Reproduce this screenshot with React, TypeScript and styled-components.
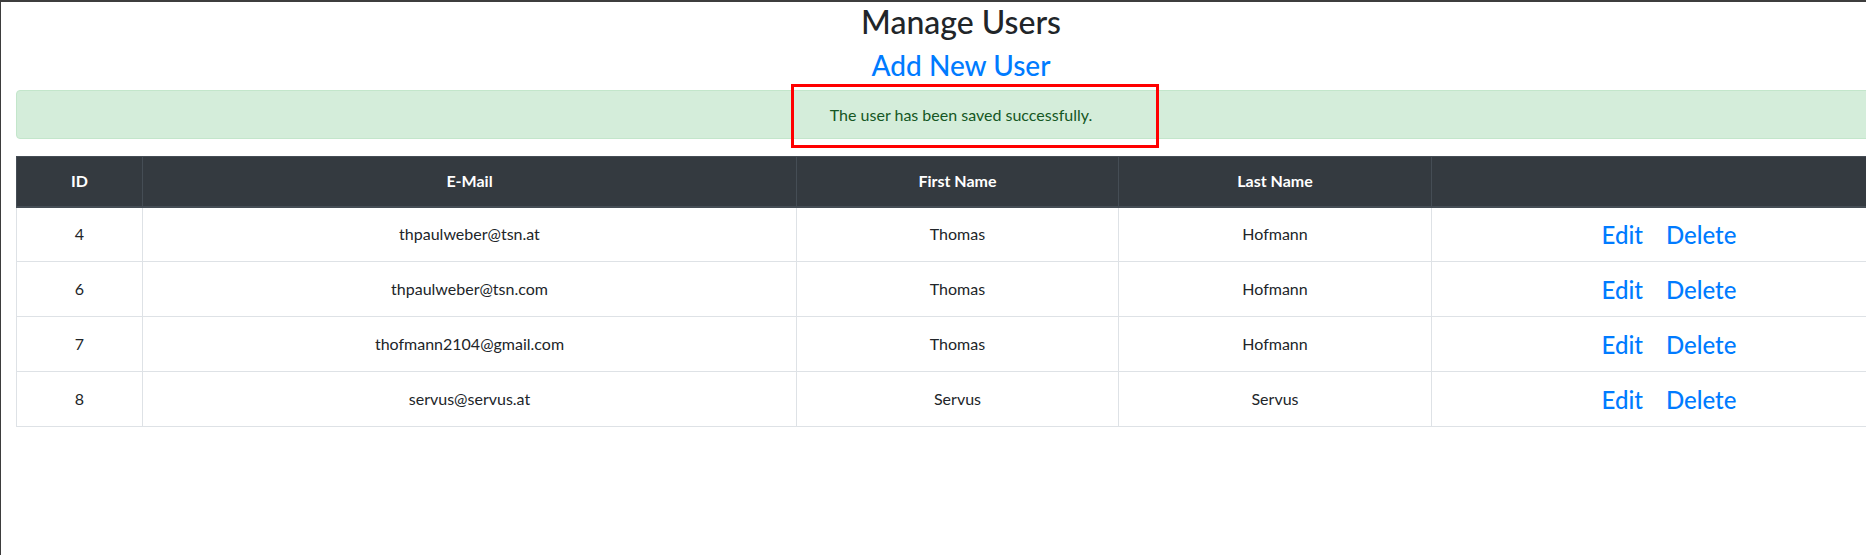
import React from "react";
import styled, { createGlobalStyle } from "styled-components";

const GlobalStyle = createGlobalStyle`
  html, body {
    margin: 0;
    padding: 0;
    overflow: hidden;
    background: #ffffff;
  }
  body {
    font-family: Lato, "Noto Sans", "Liberation Sans", sans-serif;
    font-size: 16px;
    line-height: 1.5;
    color: #212529;
  }
  * { box-sizing: border-box; }
`;

const Frame = styled.div`
  width: 1866px;
  height: 555px;
  border-top: 2px solid #3d3d3d;
  border-left: 1px solid #3d3d3d;
  overflow: hidden;
`;

const Container = styled.main`
  width: 1890px;
  margin-left: 15px;
  display: flex;
  flex-direction: column;
  align-items: stretch;
`;

const Title = styled.h2`
  margin: 1px 0 0;
  font-size: 32px;
  font-weight: 500;
  line-height: 38px;
  text-align: center;
  color: #212529;
`;

const AddLink = styled.a`
  display: block;
  margin: 7px 0 0;
  font-size: 28px;
  font-weight: 500;
  line-height: 34px;
  text-align: center;
  color: #007bff;
  text-decoration: none;
`;

const Alert = styled.div`
  position: relative;
  margin-top: 8px;
  margin-bottom: 17px;
  height: 49px;
  display: flex;
  align-items: center;
  justify-content: center;
  background: #d4edda;
  border: 1px solid #c3e6cb;
  border-radius: 4px;
  color: #155724;
  font-size: 16px;
`;

const Highlight = styled.span`
  position: absolute;
  left: 774px;
  top: -7px;
  width: 368px;
  height: 64px;
  border: 3px solid #ff0000;
  pointer-events: none;
`;

const Table = styled.table`
  width: 100%;
  border-collapse: collapse;
  table-layout: fixed;
  text-align: center;
`;

const HeadCell = styled.th`
  height: 50px;
  padding: 0 12px;
  background: #343a40;
  color: #ffffff;
  font-weight: 700;
  font-size: 16px;
  border: 1px solid #454d55;
  border-bottom-width: 2px;
  vertical-align: middle;
`;

const Row = styled.tr`
  height: 55px;
`;

const Cell = styled.td`
  padding: 0 12px;
  border: 1px solid #dee2e6;
  vertical-align: middle;
  color: #212529;
  font-size: 16px;
`;

const Actions = styled.div`
  display: flex;
  justify-content: center;
  gap: 23px;
  padding-top: 1px;
`;

const ActionLink = styled.a`
  font-size: 24px;
  font-weight: 500;
  line-height: 29px;
  color: #007bff;
  text-decoration: none;
`;

const users = [
  { id: 4, email: "thpaulweber@tsn.at", first: "Thomas", last: "Hofmann" },
  { id: 6, email: "thpaulweber@tsn.com", first: "Thomas", last: "Hofmann" },
  { id: 7, email: "thofmann2104@gmail.com", first: "Thomas", last: "Hofmann" },
  { id: 8, email: "servus@servus.at", first: "Servus", last: "Servus" },
];

export default function App() {
  return (
    <>
      <GlobalStyle />
      <Frame>
        <Container>
          <Title>Manage Users</Title>
          <AddLink href="#">Add New User</AddLink>
          <Alert>
            The user has been saved successfully.
            <Highlight />
          </Alert>
          <Table>
            <colgroup>
              <col style={{ width: 126 }} />
              <col style={{ width: 654 }} />
              <col style={{ width: 322 }} />
              <col style={{ width: 313 }} />
              <col style={{ width: 475 }} />
            </colgroup>
            <thead>
              <tr>
                <HeadCell>ID</HeadCell>
                <HeadCell>E-Mail</HeadCell>
                <HeadCell>First Name</HeadCell>
                <HeadCell>Last Name</HeadCell>
                <HeadCell />
              </tr>
            </thead>
            <tbody>
              {users.map((u) => (
                <Row key={u.id}>
                  <Cell>{u.id}</Cell>
                  <Cell>{u.email}</Cell>
                  <Cell>{u.first}</Cell>
                  <Cell>{u.last}</Cell>
                  <Cell>
                    <Actions>
                      <ActionLink href="#">Edit</ActionLink>
                      <ActionLink href="#">Delete</ActionLink>
                    </Actions>
                  </Cell>
                </Row>
              ))}
            </tbody>
          </Table>
        </Container>
      </Frame>
    </>
  );
}
